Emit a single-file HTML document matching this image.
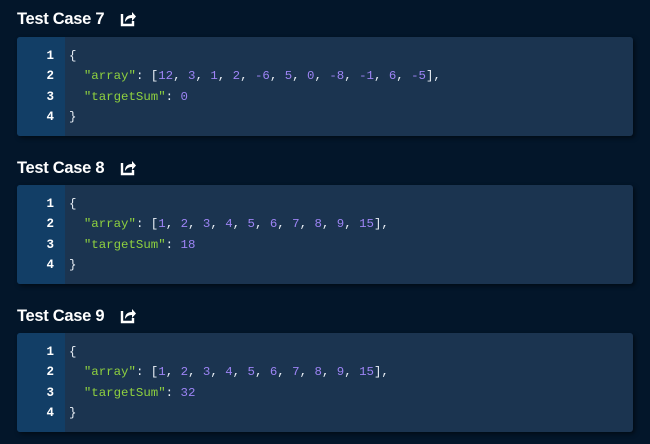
<!DOCTYPE html>
<html><head><style>
body{margin:0;width:650px;height:444px;background:#03162a;font-family:"Liberation Sans",sans-serif;overflow:hidden;position:relative}
h3{position:absolute;left:17px;margin:0;color:#fff;font-size:16.5px;font-weight:bold;letter-spacing:-0.3px;line-height:20px}
h3 svg{position:absolute;left:103px;top:1px}
.box{position:absolute;left:17px;width:616px;height:99px;background:#1b3450;border-radius:3px;box-shadow:2px 2px 4px rgba(0,0,0,.5);overflow:hidden}
.g{position:absolute;left:0;top:0;width:48px;height:100%;background:#123e66}
.ln{position:absolute;left:0;top:9px;width:37px;text-align:right;color:#fff;font:bold 12.5px/20.4px "Liberation Mono",monospace;white-space:pre}
.code{position:absolute;left:52px;top:9px;color:#e8eef5;font:12.4px/20.4px "Liberation Mono",monospace;white-space:pre}
.k{color:#8fd13f}.n{color:#9d84f5}
</style></head><body>
<h3 style="top:9px">Test Case 7<svg width="17" height="17" viewBox="0 0 17 17"><path d="M2 4v11h11v-4" fill="none" stroke="#fff" stroke-width="2.4"/><path d="M5 12c0-5 3-7 7-7V2l4 4.5-4 4.5V8c-3 0-5 1-7 4z" fill="#fff"/></svg></h3>
<div class="box" style="top:37px"><div class="g"></div><div class="ln">1
2
3
4</div><div class="code">{
  <span class="k">"array"</span>: [<span class="n">12</span>, <span class="n">3</span>, <span class="n">1</span>, <span class="n">2</span>, <span class="n">-6</span>, <span class="n">5</span>, <span class="n">0</span>, <span class="n">-8</span>, <span class="n">-1</span>, <span class="n">6</span>, <span class="n">-5</span>],
  <span class="k">"targetSum"</span>: <span class="n">0</span>
}</div></div>
<h3 style="top:158px">Test Case 8<svg width="17" height="17" viewBox="0 0 17 17"><path d="M2 4v11h11v-4" fill="none" stroke="#fff" stroke-width="2.4"/><path d="M5 12c0-5 3-7 7-7V2l4 4.5-4 4.5V8c-3 0-5 1-7 4z" fill="#fff"/></svg></h3>
<div class="box" style="top:185px"><div class="g"></div><div class="ln">1
2
3
4</div><div class="code">{
  <span class="k">"array"</span>: [<span class="n">1</span>, <span class="n">2</span>, <span class="n">3</span>, <span class="n">4</span>, <span class="n">5</span>, <span class="n">6</span>, <span class="n">7</span>, <span class="n">8</span>, <span class="n">9</span>, <span class="n">15</span>],
  <span class="k">"targetSum"</span>: <span class="n">18</span>
}</div></div>
<h3 style="top:306px">Test Case 9<svg width="17" height="17" viewBox="0 0 17 17"><path d="M2 4v11h11v-4" fill="none" stroke="#fff" stroke-width="2.4"/><path d="M5 12c0-5 3-7 7-7V2l4 4.5-4 4.5V8c-3 0-5 1-7 4z" fill="#fff"/></svg></h3>
<div class="box" style="top:333px"><div class="g"></div><div class="ln">1
2
3
4</div><div class="code">{
  <span class="k">"array"</span>: [<span class="n">1</span>, <span class="n">2</span>, <span class="n">3</span>, <span class="n">4</span>, <span class="n">5</span>, <span class="n">6</span>, <span class="n">7</span>, <span class="n">8</span>, <span class="n">9</span>, <span class="n">15</span>],
  <span class="k">"targetSum"</span>: <span class="n">32</span>
}</div></div>
</body></html>
